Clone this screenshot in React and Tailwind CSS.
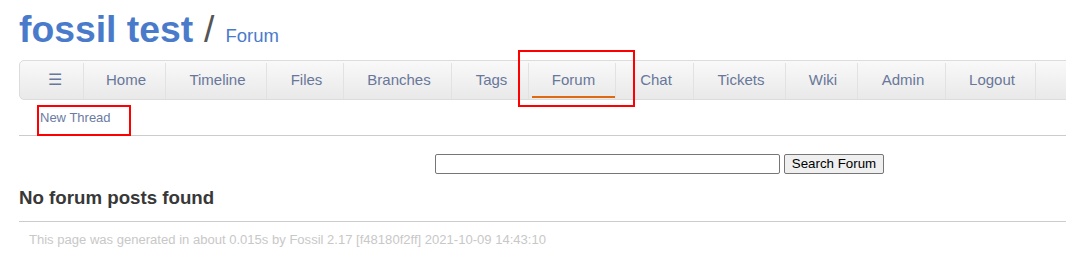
import React from "react";

const items = [
  { label: "☰", w: 63 },
  { label: "Home", w: 82 },
  { label: "Timeline", w: 101 },
  { label: "Files", w: 77 },
  { label: "Branches", w: 108 },
  { label: "Tags", w: 77 },
  { label: "Forum", w: 87, active: true },
  { label: "Chat", w: 78 },
  { label: "Tickets", w: 92 },
  { label: "Wiki", w: 72 },
  { label: "Admin", w: 88 },
  { label: "Logout", w: 90 },
];

export default function App() {
  return (
    <div
      className="relative w-[1066px] h-[276px] overflow-hidden bg-white"
      style={{ fontFamily: '"Liberation Sans", Arial, sans-serif' }}
    >
      <div className="pl-[19px] w-[1100px]">
        {/* Title */}
        <div className="h-[60px] pt-[8px] flex items-baseline leading-[42px]">
          <span className="text-[37.3px] font-bold text-[#4a7bcb]">fossil test</span>
          <span className="text-[37.3px] text-[#555] ml-[11px]">/</span>
          <span className="text-[18.5px] text-[#4a7bcb] ml-[11px]">Forum</span>
        </div>

        {/* Main menu */}
        <div className="h-[40px] w-[1080px] rounded-[5px] border border-[#dcdcdc] bg-gradient-to-b from-[#f9f9f9] to-[#e9e9e9] flex">
          {items.map((it, i) => (
            <div
              key={it.label}
              className="relative flex items-center justify-center h-full text-[15px] text-[#68779a]"
              style={{ width: it.w }}
            >
              {i > 0 && (
                <div className="absolute left-0 top-[2px] bottom-0 w-px bg-[#e2e2e2]" />
              )}
              <span className={i === 0 ? "pl-[6px] text-[16px]" : "pl-[4px]"}>{it.label}</span>
              {it.active && (
                <div className="absolute left-[4px] right-[-1px] bottom-[1px] h-[2px] bg-[#dd6a10]" />
              )}
            </div>
          ))}
          <div className="relative h-full w-[40px]">
            <div className="absolute left-0 top-[2px] bottom-0 w-px bg-[#e2e2e2]" />
          </div>
        </div>

        {/* Submenu */}
        <div className="h-[36px] border-b border-[#cccccc] pl-[21px] pt-[10px] text-[13px] leading-[16px] text-[#6a7ca3]">
          New Thread
        </div>

        {/* Search form */}
        <div className="pt-[17px] pl-[416px] flex items-center gap-[4px] h-[38px]">
          <div className="w-[345px] h-[20px] border border-[#767676] rounded-[2px] bg-white" />
          <button className="h-[20px] w-[100px] border border-[#767676] rounded-[2px] bg-[#efefef] text-[13.33px] leading-[16px] text-black">
            Search Forum
          </button>
        </div>

        {/* Heading */}
        <div className="pt-[13px] h-[48px] border-b border-[#cccccc] text-[18.7px] font-bold text-[#383838] leading-[22px]">
          No forum posts found
        </div>

        {/* Footer */}
        <div className="pl-[10px] pt-[10px] text-[13.05px] leading-[16px] text-[#c8c8c8]">
          This page was generated in about 0.015s by Fossil 2.17 [f48180f2ff] 2021-10-09 14:43:10
        </div>
      </div>

      {/* Annotation boxes */}
      <div className="absolute left-[518px] top-[50px] w-[117px] h-[57px] border-2 border-[#ff0000]" />
      <div className="absolute left-[37px] top-[105px] w-[94px] h-[31px] border-2 border-[#ff0000]" />
    </div>
  );
}
